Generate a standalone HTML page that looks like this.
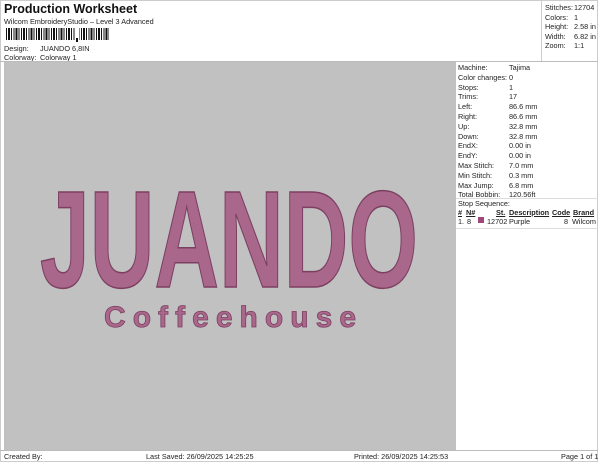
<!DOCTYPE html>
<html><head><style>
body{margin:0;width:600px;height:464px;background:#fff;position:relative;overflow:hidden;font-family:"Liberation Sans",sans-serif;color:#222}
.a{position:absolute;white-space:nowrap;font-size:7.3px;line-height:9px}
</style></head><body>
<div style="position:absolute;left:0;top:0;width:598px;height:462px;border:1px solid #ccc;box-sizing:border-box"></div>
<div class="a" style="left:4px;top:2px;font-size:12.5px;line-height:14px;font-weight:bold;color:#111">Production Worksheet</div>
<div class="a" style="left:4px;top:17px">Wilcom EmbroideryStudio – Level 3 Advanced</div>
<div style="position:absolute;left:6px;top:28px;width:103px;height:12px;background:repeating-linear-gradient(90deg,#111 0 1px,#fff 1px 2px,#111 2px 4px,#fff 4px 5px,#111 5px 6px,#fff 6px 7.5px)"></div>
<div style="position:absolute;left:75px;top:28px;width:4px;height:13px;background:#fff"></div>
<div style="position:absolute;left:76px;top:38px;width:2px;height:4px;background:#111"></div>
<div class="a" style="left:4px;top:44px">Design:</div><div class="a" style="left:40px;top:44px">JUANDO 6,8IN</div>
<div class="a" style="left:4px;top:53px">Colorway:</div><div class="a" style="left:40px;top:53px">Colorway 1</div>
<div style="position:absolute;left:541px;top:0;width:1px;height:61px;background:#ccc"></div>
<div style="position:absolute;left:0;top:61px;width:598px;height:1px;background:#bbb"></div>
<div class="a" style="left:545px;top:3px;line-height:9.6px">Stitches:<br>Colors:<br>Height:<br>Width:<br>Zoom:</div>
<div class="a" style="left:574px;top:3px;line-height:9.6px">12704<br>1<br>2.58 in<br>6.82 in<br>1:1</div>
<div style="position:absolute;left:4px;top:62px;width:452px;height:388px;background:#c1c1c1"></div>
<svg style="position:absolute;left:0;top:0" width="600" height="464">
<text x="40" y="287" textLength="378" lengthAdjust="spacingAndGlyphs" font-family="Liberation Sans" font-weight="bold" font-size="138" fill="#a8678b" stroke="#7c3f60" stroke-width="1.5">JUANDO</text>
<text x="104" y="327" textLength="252" lengthAdjust="spacing" font-family="Liberation Sans" font-weight="bold" font-size="30" fill="#a8678b" stroke="#7c3f60" stroke-width="0.8">Coffeehouse</text>
</svg>
<div class="a" style="left:458px;top:63px;line-height:9.8px">Machine:<br>Color changes:<br>Stops:<br>Trims:<br>Left:<br>Right:<br>Up:<br>Down:<br>EndX:<br>EndY:<br>Max Stitch:<br>Min Stitch:<br>Max Jump:<br>Total Bobbin:</div>
<div class="a" style="left:509px;top:63px;line-height:9.8px">Tajima<br>0<br>1<br>17<br>86.6 mm<br>86.6 mm<br>32.8 mm<br>32.8 mm<br>0.00 in<br>0.00 in<br>7.0 mm<br>0.3 mm<br>6.8 mm<br>120.56ft</div>
<div style="position:absolute;left:456px;top:198px;width:142px;height:1px;background:#ddd"></div>
<div class="a" style="left:458px;top:199px">Stop Sequence:</div>
<div class="a" style="left:458px;top:208px;font-weight:bold;text-decoration:underline">#</div>
<div class="a" style="left:466px;top:208px;font-weight:bold;text-decoration:underline">N#</div>
<div class="a" style="left:496px;top:208px;font-weight:bold;text-decoration:underline">St.</div>
<div class="a" style="left:509px;top:208px;font-weight:bold;text-decoration:underline">Description</div>
<div class="a" style="left:552px;top:208px;font-weight:bold;text-decoration:underline">Code</div>
<div class="a" style="left:573px;top:208px;font-weight:bold;text-decoration:underline">Brand</div>
<div class="a" style="left:458px;top:217px">1.</div><div class="a" style="left:467px;top:217px">8</div>
<div style="position:absolute;left:478px;top:217px;width:6px;height:6px;background:#a0487a"></div>
<div class="a" style="left:487px;top:217px">12702</div><div class="a" style="left:509px;top:217px">Purple</div>
<div class="a" style="left:564px;top:217px">8</div><div class="a" style="left:572px;top:217px">Wilcom</div>
<div style="position:absolute;left:456px;top:228px;width:142px;height:1px;background:#ddd"></div>
<div style="position:absolute;left:0;top:450px;width:598px;height:1px;background:#bbb"></div>
<div class="a" style="left:4px;top:452px">Created By:</div>
<div class="a" style="left:146px;top:452px">Last Saved: 26/09/2025 14:25:25</div>
<div class="a" style="left:354px;top:452px">Printed: 26/09/2025 14:25:53</div>
<div class="a" style="left:561px;top:452px">Page 1 of 1</div>
</body></html>
